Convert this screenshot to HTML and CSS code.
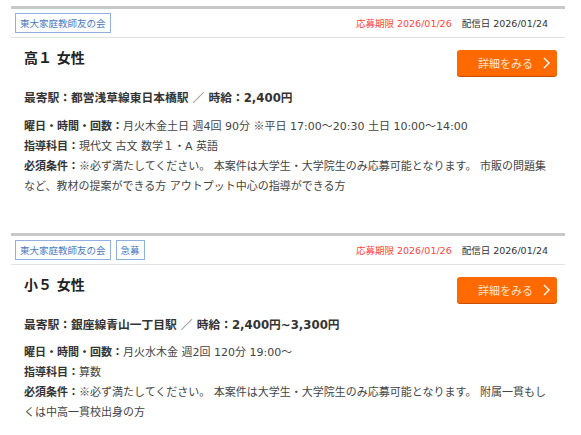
FILE: index.html
```html
<!DOCTYPE html>
<html lang="ja">
<head>
<meta charset="utf-8">
<link rel="stylesheet" href="styles.css">
</head>
<body>
<div class="list">
  <div class="card">
    <div class="card-head">
      <div class="tags"><span class="tag">東大家庭教師友の会</span></div>
      <div class="dates"><span class="deadline">応募期限 2026/01/26</span><span class="posted">配信日 2026/01/24</span></div>
    </div>
    <div class="card-body">
      <div class="title-row">
        <h2 class="title">高１ 女性</h2>
        <a class="btn">詳細をみる<svg class="chev" width="7" height="12" viewBox="0 0 7 12"><path d="M1 1 L6 6 L1 11" fill="none" stroke="#fff" stroke-width="1.4"/></svg></a>
      </div>
      <p class="station">最寄駅：都営浅草線東日本橋駅 ／ 時給：2,400円</p>
      <ul class="info">
        <li><b>曜日・時間・回数：</b>月火木金土日 週4回 90分 <span class="cjk">※</span>平日 17:00～20:30 土日 10:00～14:00</li>
        <li><b>指導科目：</b>現代文 古文 数学１・A 英語</li>
        <li><b>必須条件：</b><span class="cjk">※</span>必ず満たしてください。 本案件は大学生・大学院生のみ応募可能となります。 市販の問題集など、教材の提案ができる方 アウトプット中心の指導ができる方</li>
      </ul>
    </div>
  </div>
  <div class="card">
    <div class="card-head">
      <div class="tags"><span class="tag">東大家庭教師友の会</span><span class="tag">急募</span></div>
      <div class="dates"><span class="deadline">応募期限 2026/01/26</span><span class="posted">配信日 2026/01/24</span></div>
    </div>
    <div class="card-body">
      <div class="title-row">
        <h2 class="title">小５ 女性</h2>
        <a class="btn">詳細をみる<svg class="chev" width="7" height="12" viewBox="0 0 7 12"><path d="M1 1 L6 6 L1 11" fill="none" stroke="#fff" stroke-width="1.4"/></svg></a>
      </div>
      <p class="station">最寄駅：銀座線青山一丁目駅 ／ 時給：2,400円~3,300円</p>
      <ul class="info">
        <li><b>曜日・時間・回数：</b>月火水木金 週2回 120分 19:00～</li>
        <li><b>指導科目：</b>算数</li>
        <li><b>必須条件：</b><span class="cjk">※</span>必ず満たしてください。 本案件は大学生・大学院生のみ応募可能となります。 附属一貫もしくは中高一貫校出身の方</li>
      </ul>
    </div>
  </div>
</div>
</body>
</html>
```
FILE: styles.css
```css
* { box-sizing: border-box; }
body {
  margin: 0;
  background: #fff;
  font-family: "DejaVu Sans", "Noto Sans CJK JP", sans-serif;
  color: #333;
}
.cjk { font-family: "Noto Sans CJK JP", sans-serif; }
.list {
  display: flex;
  flex-direction: column;
  gap: 37px;
  padding: 6px 16px 0 11px;
}
.card {
  border-top: 3px solid #c8c8c8;
}
.card-head {
  display: flex;
  justify-content: space-between;
  align-items: center;
  height: 29px;
  padding: 0 17px 1px 4px;
  border-bottom: 1px solid #e2e2e2;
}
.tags { display: flex; gap: 5px; }
.tag {
  display: inline-block;
  height: 20px;
  line-height: 18px;
  padding: 0 4px;
  border: 1px solid #8fb0e0;
  color: #4a78bd;
  font-size: 9.5px;
  font-family: "Noto Sans CJK JP", sans-serif;
}
.dates { display: flex; gap: 10px; font-size: 9.5px; }
.deadline { color: #ff4444; }
.posted { color: #333; }
.card-body {
  padding: 12px 8px 0 13px;
}
.title-row {
  display: flex;
  justify-content: space-between;
  align-items: flex-start;
}
.title {
  margin: -2px 0 0;
  font-size: 14px;
  line-height: 20px;
  font-weight: bold;
  color: #222;
}
.btn {
  display: flex;
  align-items: center;
  justify-content: flex-end;
  gap: 10px;
  width: 100px;
  height: 26px;
  padding-right: 7px;
  background: #ff6a00;
  border-radius: 3px;
  box-shadow: 0 1px 0 #c94f00;
  color: #ffe3cf;
  font-size: 11px;
}
.chev { display: block; }
.station {
  margin: 12px 0 0;
  font-size: 11.75px;
  line-height: 20px;
  font-weight: bold;
  color: #333;
}
.info {
  list-style: none;
  margin: 8px 0 0;
  padding: 0 5px 0 0;
  font-size: 11px;
  line-height: 19.5px;
  color: #444;
}
.info b { color: #333; }
```
